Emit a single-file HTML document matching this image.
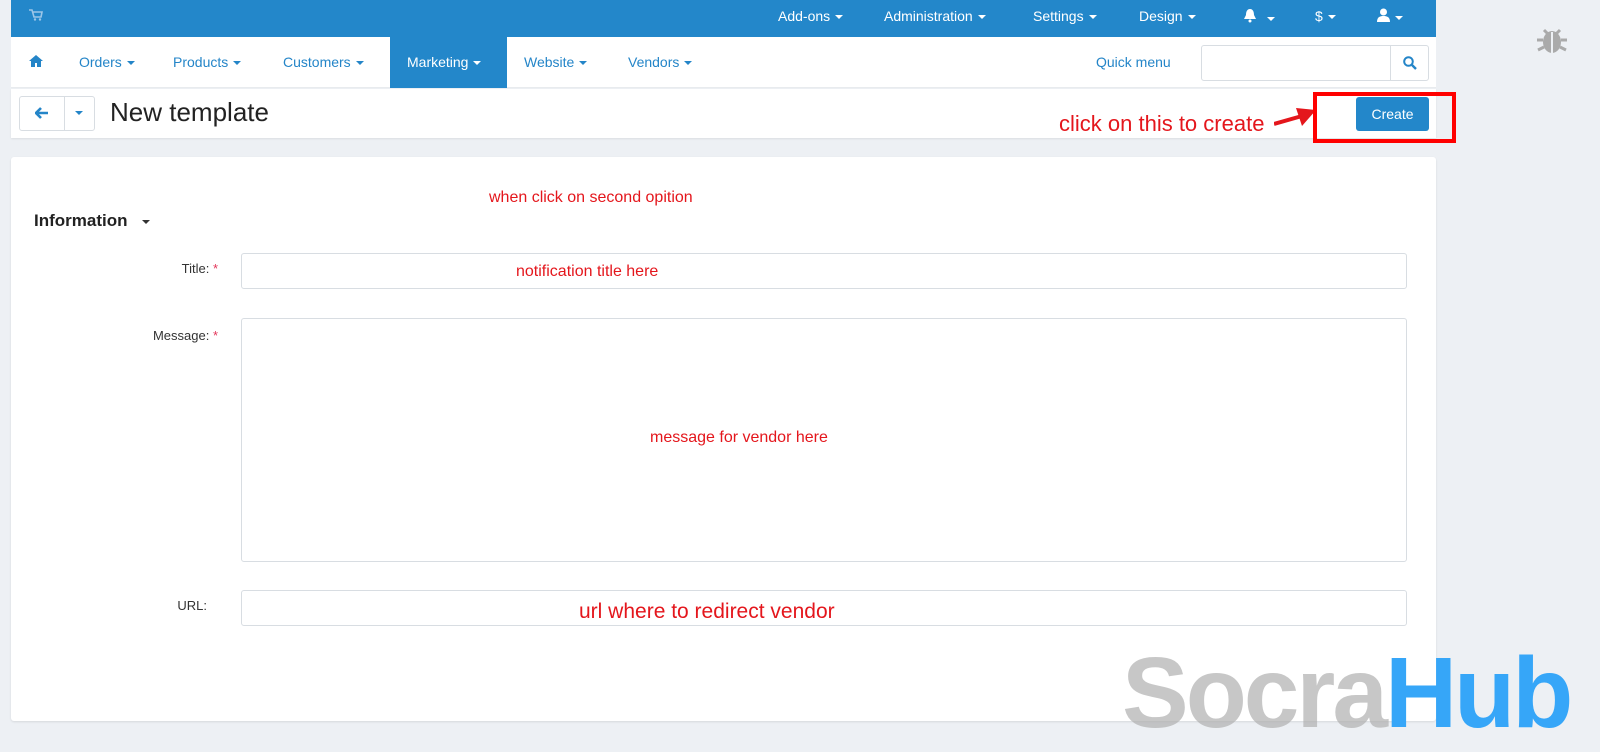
<!DOCTYPE html>
<html><head><meta charset="utf-8"><style>
*{box-sizing:border-box;margin:0;padding:0}
body{width:1600px;height:752px;background:#edf0f4;font-family:"Liberation Sans",sans-serif;position:relative;overflow:hidden}
.abs{position:absolute}
.top{left:11px;top:0;width:1425px;height:37px;background:#2387ca}
.top span{position:absolute;top:8px;color:#fff;font-size:14px}
.car{display:inline-block;width:0;height:0;border-left:4px solid transparent;border-right:4px solid transparent;border-top:4px solid currentColor;vertical-align:middle;margin-left:5px}
.nav{left:11px;top:37px;width:1425px;height:51px;background:#fff;border-bottom:1px solid #e8ebee}
.nav span{position:absolute;top:17px;color:#2485c8;font-size:14px}
.mk{position:absolute;left:379px;top:0;width:117px;height:51px;background:#2387ca}
.tb{left:11px;top:89px;width:1425px;height:49px;background:#fff;box-shadow:0 1px 2px rgba(0,0,0,.08)}
.card{left:11px;top:157px;width:1425px;height:564px;background:#fff;box-shadow:0 1px 2px rgba(0,0,0,.1);border-radius:3px}
.inp{position:absolute;border:1px solid #d8dde2;border-radius:3px;background:#fff}
.red{color:#e4161c;position:absolute}
.lbl{position:absolute;font-size:13px;color:#333;text-align:right;width:200px}
.lbl b{color:#e3365a;font-weight:normal}
</style></head><body>
<div class="abs top">
<svg style="position:absolute;left:18px;top:9px" width="14" height="12" viewBox="0 0 14 12"><path d="M0 1h3l2 7h7l1-5H4" fill="none" stroke="#9cc6e8" stroke-width="1.6"/><circle cx="6" cy="10.5" r="1.2" fill="#9cc6e8"/><circle cx="11" cy="10.5" r="1.2" fill="#9cc6e8"/></svg>
<span style="left:767px">Add-ons<i class="car"></i></span>
<span style="left:873px">Administration<i class="car"></i></span>
<span style="left:1022px">Settings<i class="car"></i></span>
<span style="left:1128px">Design<i class="car"></i></span>
<span style="left:1232px"><svg width="14" height="15" viewBox="0 0 14 15"><path d="M7 1C4 1 3 4 3 7L1 11h12L11 7C11 4 10 1 7 1z" fill="#fff"/><circle cx="7" cy="13" r="1.5" fill="#fff"/></svg><i class="car" style="margin-left:10px"></i></span>
<span style="left:1304px">$<i class="car"></i></span>
<span style="left:1366px"><svg width="13" height="14" viewBox="0 0 13 14"><circle cx="6.5" cy="4" r="3.5" fill="#fff"/><path d="M0 14c0-5 3-6 6.5-6S13 9 13 14z" fill="#fff"/></svg><i class="car"></i></span>
</div>
<div class="abs nav">
<div class="mk"></div>
<svg style="position:absolute;left:18px;top:18px" width="14" height="12" viewBox="0 0 14 12"><path d="M7 0L0 6h2v6h4V8h2v4h4V6h2z" fill="#2485c8"/></svg>
<span style="left:68px">Orders<i class="car"></i></span>
<span style="left:162px">Products<i class="car"></i></span>
<span style="left:272px">Customers<i class="car"></i></span>
<span style="left:396px;color:#fff">Marketing<i class="car"></i></span>
<span style="left:513px">Website<i class="car"></i></span>
<span style="left:617px">Vendors<i class="car"></i></span>
<span style="left:1085px">Quick menu</span>
<div class="inp" style="left:1190px;top:8px;width:228px;height:36px"></div>
<div style="position:absolute;left:1379px;top:8px;width:1px;height:36px;background:#d8dde2"></div>
<svg style="position:absolute;left:1392px;top:19px" width="14" height="14" viewBox="0 0 14 14"><circle cx="5.5" cy="5.5" r="4.3" fill="none" stroke="#2485c8" stroke-width="2"/><path d="M9 9l4 4" stroke="#2485c8" stroke-width="2.4"/></svg>
</div>
<div class="abs tb">
<div class="inp" style="left:8px;top:7px;width:76px;height:35px"></div>
<div style="position:absolute;left:53px;top:8px;width:1px;height:33px;background:#d8dde2"></div>
<svg style="position:absolute;left:24px;top:18px" width="14" height="12" viewBox="0 0 14 12"><path d="M6 1L1 6l5 5M1 6h12" fill="none" stroke="#2485c8" stroke-width="2.6"/></svg>
<i class="car" style="position:absolute;left:59px;top:22px;color:#2485c8"></i>
<div style="position:absolute;left:99px;top:8px;font-size:26px;color:#222">New template</div>
<div style="position:absolute;left:1345px;top:8px;width:73px;height:34px;background:#2387ca;border-radius:3px;color:#fff;font-size:14px;text-align:center;line-height:34px">Create</div>
</div>
<div class="red" style="left:1059px;top:111px;font-size:22px">click on this to create</div>
<svg class="abs" style="left:1274px;top:104px" width="46" height="26" viewBox="0 0 46 26"><path d="M0 20L28 12" stroke="#e4161c" stroke-width="4"/><path d="M22 4L42 6L28 22z" fill="#e4161c"/></svg>
<div class="abs" style="left:1313px;top:92px;width:143px;height:51px;border:4px solid #f00"></div>
<div class="abs card">
<div class="red" style="left:478px;top:32px;font-size:16px">when click on second opition</div>
<div style="position:absolute;left:23px;top:54px;font-size:17px;font-weight:bold;color:#222">Information<i class="car" style="margin-left:14px;color:#333"></i></div>
<div class="lbl" style="left:7px;top:104px">Title: <b>*</b></div>
<div class="inp" style="left:230px;top:96px;width:1166px;height:36px"></div>
<div class="red" style="left:505px;top:106px;font-size:16px">notification title here</div>
<div class="lbl" style="left:7px;top:171px">Message: <b>*</b></div>
<div class="inp" style="left:230px;top:161px;width:1166px;height:244px"></div>
<div class="red" style="left:639px;top:272px;font-size:16px">message for vendor here</div>
<div class="lbl" style="left:-4px;top:441px">URL:</div>
<div class="inp" style="left:230px;top:433px;width:1166px;height:36px"></div>
<div class="red" style="left:568px;top:443px;font-size:21px">url where to redirect vendor</div>
</div>
<svg class="abs" style="left:1535px;top:22px" width="34" height="34" viewBox="0 0 34 34"><ellipse cx="17" cy="20" rx="9" ry="11" fill="#aaa"/><path d="M9 8l4 4M25 8l-4 4M2 18h6M26 18h6M3 28l6-3M31 28l-6-3" stroke="#aaa" stroke-width="3"/><path d="M17 10v21" stroke="#edf0f4" stroke-width="2"/></svg>
<div class="abs" style="left:1122px;top:643px;font-size:100px;font-weight:bold;font-family:'Liberation Sans',sans-serif;letter-spacing:-3px;line-height:1;white-space:nowrap"><span style="color:rgba(175,175,175,.7)">Socra</span><span style="color:#36a6f8">Hub</span></div>
</body></html>
